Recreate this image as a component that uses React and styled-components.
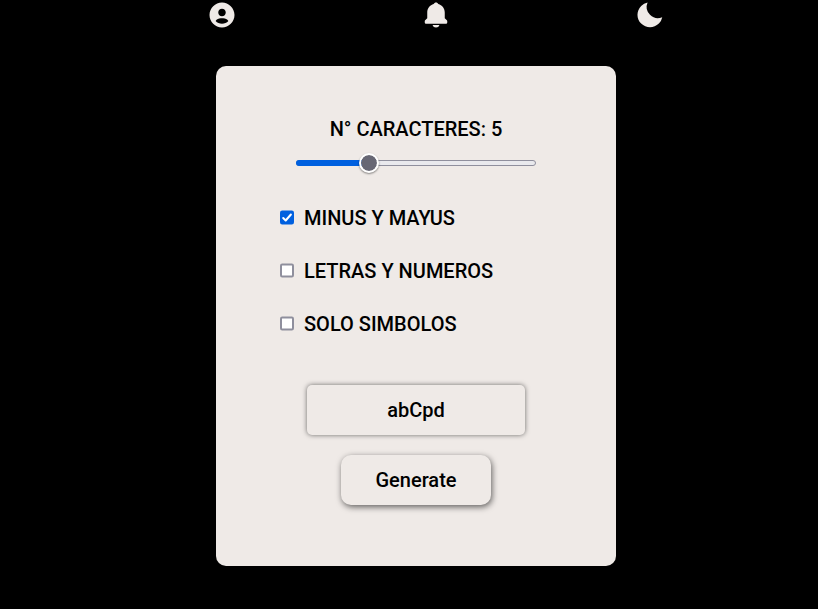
import React, { useState } from "react";
import styled, { createGlobalStyle } from "styled-components";
import { BiSolidUserCircle, BiSolidBell, BiSolidMoon } from "react-icons/bi";

const GlobalStyle = createGlobalStyle`
  * { box-sizing: border-box; }
  body {
    margin: 0;
    background: #000;
    color: #000;
    font-family: Roboto, sans-serif;
    font-size: 20px;
    font-weight: 500;
    overflow: hidden;
  }
`;

const Page = styled.div`
  width: 818px;
  height: 609px;
  background: #000;
`;

const Nav = styled.nav`
  display: flex;
  justify-content: space-between;
  width: 458px;
  height: 30px;
  margin-left: 207px;
  color: #efeae7;

  svg { display: block; width: 30px; height: 30px; }
`;

const Card = styled.main`
  display: flex;
  flex-direction: column;
  align-items: center;
  width: 400px;
  height: 500px;
  margin: 36px 0 0 216px;
  padding-top: 51px;
  border-radius: 10px;
  background: #efeae7;
`;

const Title = styled.label`
  line-height: 24px;
`;

const Slider = styled.div`
  position: relative;
  width: 240px;
  height: 20px;
  margin-top: 12px;
  padding-top: 7px;
`;

const SliderInput = styled.input`
  position: absolute;
  inset: 0;
  width: 100%;
  margin: 0;
  opacity: 0;
`;

const Rail = styled.div`
  height: 6px;
  border: 1px solid #8f8f9d;
  border-radius: 3px;
  background: #e9e9ed;
`;

const Fill = styled.div`
  position: absolute;
  top: 7px;
  left: 0;
  height: 6px;
  border-radius: 3px 0 0 3px;
  background: #0060df;
`;

const Thumb = styled.div`
  position: absolute;
  top: 0;
  width: 20px;
  height: 20px;
  border: 2px solid #fff;
  border-radius: 50%;
  background: #676774;
  background-clip: padding-box;
  box-shadow: 0 1px 2px rgba(0, 0, 0, 0.45);
`;

const Options = styled.div`
  display: flex;
  flex-direction: column;
  align-self: stretch;
  gap: 29px;
  margin: 33px 0 0 64px;
`;

const Option = styled.label`
  display: flex;
  align-items: center;
  gap: 10px;
  height: 24px;
  line-height: 24px;
`;

const CheckInput = styled.input`
  position: absolute;
  opacity: 0;
`;

const Box = styled.svg`
  display: block;
  width: 14px;
  height: 15px;
  margin-top: -1px;
`;

const Output = styled.div`
  display: flex;
  align-items: center;
  justify-content: center;
  width: 218px;
  height: 50px;
  margin-top: 49px;
  border-radius: 5px;
  box-shadow: 0 0 5px rgba(0, 0, 0, 0.55);
`;

const Generate = styled.button`
  width: 150px;
  height: 50px;
  margin-top: 20px;
  padding: 0;
  border: 0;
  border-radius: 10px;
  background: #efeae7;
  color: #000;
  font: inherit;
  box-shadow: 1px 2px 6px rgba(0, 0, 0, 0.6);
`;

const OPTIONS = ["MINUS Y MAYUS", "LETRAS Y NUMEROS", "SOLO SIMBOLOS"];
const SETS = [
  "abcdefghijklmnopqrstuvwxyzABCDEFGHIJKLMNOPQRSTUVWXYZ",
  "abcdefghijklmnopqrstuvwxyz0123456789",
  "!@#$%&*()-_=+?",
];
const MIN = 1;
const MAX = 15;
const TRAVEL = 220;

function CheckBox({ checked }) {
  return (
    <Box viewBox="0 0 14 15" fill="none">
      <rect
        x="1"
        y="1.5"
        width="12"
        height="12"
        rx="1.2"
        fill={checked ? "#0060df" : "#fff"}
        stroke={checked ? "#0060df" : "#8f8f9d"}
        strokeWidth="2"
      />
      {checked && (
        <path
          d="M3.2 8 5.7 10.5 10.9 4.5"
          stroke="#fff"
          strokeWidth="2"
          strokeLinecap="round"
          strokeLinejoin="round"
        />
      )}
    </Box>
  );
}

export default function App() {
  const [count, setCount] = useState(5);
  const [mode, setMode] = useState(0);
  const [password, setPassword] = useState("abCpd");
  const thumbLeft = Math.round(((count - MIN) / (MAX - MIN)) * TRAVEL);

  const generate = () => {
    const set = SETS[mode];
    setPassword(
      Array.from({ length: count }, () => set[Math.floor(Math.random() * set.length)]).join("")
    );
  };

  return (
    <Page>
      <GlobalStyle />
      <Nav>
        <BiSolidUserCircle />
        <BiSolidBell />
        <BiSolidMoon />
      </Nav>
      <Card>
        <Title htmlFor="count">N° CARACTERES: {count}</Title>
        <Slider>
          <Rail />
          <Fill style={{ width: thumbLeft + 10 }} />
          <Thumb style={{ left: thumbLeft }} />
          <SliderInput
            id="count"
            type="range"
            min={MIN}
            max={MAX}
            value={count}
            onChange={(e) => setCount(Number(e.target.value))}
          />
        </Slider>
        <Options>
          {OPTIONS.map((label, i) => (
            <Option key={label}>
              <CheckInput type="checkbox" checked={mode === i} onChange={() => setMode(i)} />
              <CheckBox checked={mode === i} />
              {label}
            </Option>
          ))}
        </Options>
        <Output>{password}</Output>
        <Generate onClick={generate}>Generate</Generate>
      </Card>
    </Page>
  );
}
